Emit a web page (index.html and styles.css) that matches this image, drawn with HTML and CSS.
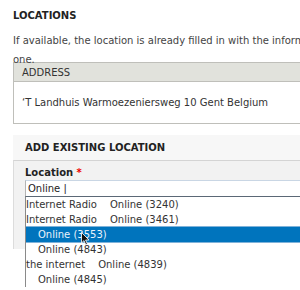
FILE: index.html
```html
<!DOCTYPE html>
<html lang="en">
<head>
    <meta charset="UTF-8">
    <meta name="viewport" content="width=device-width, initial-scale=1.0">
    <title>Locations</title>
    <link rel="stylesheet" href="styles.css">
</head>
<body>
    <div class="page">
        <h2 class="section-title">Locations</h2>
        <p class="description">If available, the location is already filled in with the information from the event page. Otherwise select or add a new<br>one.</p>

        <table class="address-table">
            <thead>
                <tr><th>Address</th></tr>
            </thead>
            <tbody>
                <tr><td>‘T Landhuis Warmoezeniersweg 10 Gent Belgium</td></tr>
            </tbody>
        </table>

        <div class="existing-location">
            <div class="fieldset-legend">Add existing location</div>
            <div class="fieldset-wrapper">
                <label for="location">Location <span class="required">*</span></label>
                <div class="autocomplete">
                    <input type="text" id="location" value="Online |">
                    <ul class="autocomplete-list">
                        <li><span class="group">Internet Radio</span>Online (3240)</li>
                        <li><span class="group">Internet Radio</span>Online (3461)</li>
                        <li class="sub active">Online (3553)</li>
                        <li class="sub">Online (4843)</li>
                        <li><span class="group">the internet</span>Online (4839)</li>
                        <li class="sub">Online (4845)</li>
                    </ul>
                    <svg class="cursor" width="9" height="14" viewBox="0 0 9 14">
                        <path d="M0.5 0.5 L0.5 11 L3 8.6 L4.8 12.8 L6.4 12.1 L4.6 8 L8 8 Z" fill="#111" stroke="#fff" stroke-width="0.8"/>
                    </svg>
                </div>
            </div>
        </div>
    </div>
</body>
</html>
```

FILE: styles.css
```css
html, body {
    height: 290px;
}
body {
    font-family: "DejaVu Sans", Verdana, sans-serif;
    font-size: 10px;
    color: #333;
    background-color: white;
    margin: 0;
    overflow: hidden;
}
.page {
    width: 300px;
    height: 290px;
    box-sizing: border-box;
    padding: 9px 0 0 13px;
    overflow: hidden;
}
.page > * {
    width: 380px;
}
.section-title {
    margin: 0;
    font-size: 10px;
    line-height: 14px;
    font-weight: bold;
    text-transform: uppercase;
    color: #222;
}
.description {
    margin: 8px 0 0;
    line-height: 19px;
    white-space: nowrap;
    color: #444;
}
.address-table {
    border-collapse: collapse;
    margin-top: -7px;
}
.address-table th {
    text-align: left;
    font-weight: normal;
    text-transform: uppercase;
    background-color: #e1e2dc;
    border: 1px solid #bfbfba;
    height: 18px;
    padding: 0 8px;
    color: #333;
}
.address-table td {
    border: 1px solid #bfbfba;
    border-top: none;
    height: 41px;
    padding: 0 8px;
    color: #333;
}
.existing-location {
    margin-top: 11px;
    background-color: #f7f7f7;
}
.fieldset-legend {
    height: 25px;
    line-height: 25px;
    padding-left: 12px;
    font-weight: bold;
    text-transform: uppercase;
    color: #222;
}
.fieldset-wrapper {
    background-color: #f2f2f2;
    border-top: 1px solid #d4d4d4;
    border-left: 1px solid #dcdcdc;
    padding: 4px 0 53px 11px;
}
label {
    display: block;
    font-weight: bold;
    line-height: 15px;
    color: #222;
}
.required {
    color: #e00;
}
.autocomplete {
    position: relative;
}
.autocomplete input {
    display: block;
    width: 100%;
    box-sizing: border-box;
    height: 16px;
    margin: 0;
    padding: 0 2px;
    font-family: "DejaVu Sans", Verdana, sans-serif;
    font-size: 10px;
    color: #222;
    background-color: white;
    border: 1px solid #c9d6e4;
    border-left-color: #b4b4b4;
    border-bottom: none;
    outline: none;
}
.autocomplete-list {
    position: absolute;
    top: 16px;
    left: 0;
    width: 100%;
    margin: 0;
    padding: 0;
    list-style: none;
    background-color: white;
    border-top: 1px solid #5b6876;
    border-left: 1px solid #8a8a8a;
}
.autocomplete-list li {
    height: 15px;
    line-height: 15px;
    white-space: nowrap;
    color: #333;
}
.autocomplete-list .group {
    margin-right: 13px;
}
.autocomplete-list .sub {
    padding-left: 12px;
}
.autocomplete-list .active {
    background-color: #0074bd;
    color: #eaf3fb;
    box-shadow: 0 -1px 0 #7fb2d9, 0 1px 0 #7fb2d9;
}
.cursor {
    position: absolute;
    left: 56px;
    top: 52px;
}
```
